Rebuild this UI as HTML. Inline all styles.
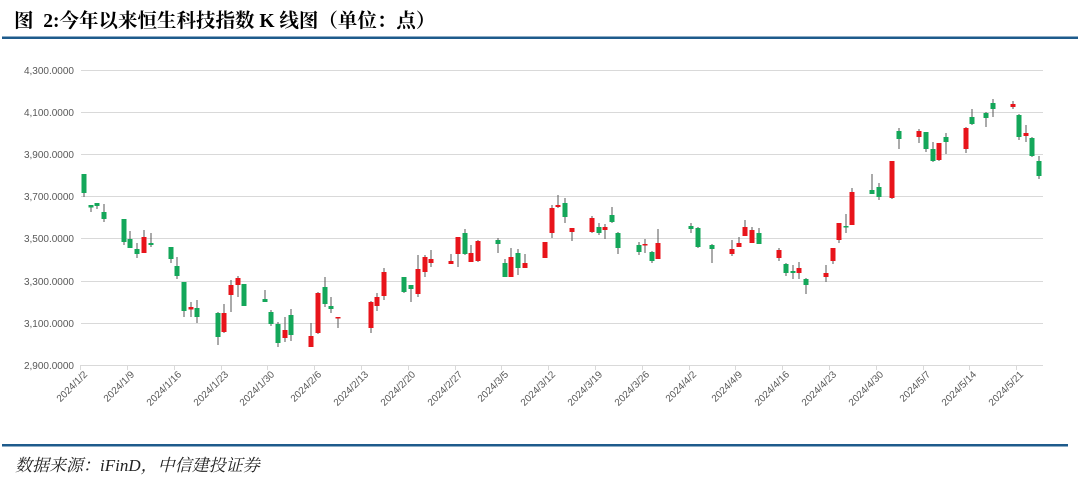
<!DOCTYPE html>
<html><head><meta charset="utf-8"><style>
html,body{margin:0;padding:0;background:#fff;width:1080px;height:483px;overflow:hidden}
.t{position:absolute;left:14px;top:5px;font:bold 19.5px "Liberation Serif","Noto Serif CJK SC","Noto Sans CJK SC",serif;color:#000;white-space:nowrap}
.s{position:absolute;left:15px;top:451px;font:italic 17px "Liberation Serif","Noto Serif CJK SC","Noto Sans CJK SC",serif;color:#222;white-space:nowrap}
</style></head><body>
<div class="t">图&nbsp; 2:今年以来恒生科技指数 K 线图（单位：点）</div>
<svg width="1080" height="483" style="position:absolute;left:0;top:0">
<rect x="2" y="36.5" width="1076" height="2.5" fill="#1e5b8c"/>
<rect x="2" y="444" width="1066" height="2.5" fill="#1e5b8c"/>
<g stroke="#d9d9d9" stroke-width="1">
<line x1="81" y1="70.5" x2="1043" y2="70.5"/><line x1="81" y1="112.5" x2="1043" y2="112.5"/>
<line x1="81" y1="154.5" x2="1043" y2="154.5"/><line x1="81" y1="196.5" x2="1043" y2="196.5"/>
<line x1="81" y1="238.5" x2="1043" y2="238.5"/><line x1="81" y1="281.5" x2="1043" y2="281.5"/>
<line x1="81" y1="323.5" x2="1043" y2="323.5"/><line x1="81" y1="365.5" x2="1043" y2="365.5"/>
</g>
<g font-family="Liberation Sans,sans-serif" font-size="10" fill="#595959" text-anchor="end">
<text x="74" y="74">4,300.0000</text><text x="74" y="116">4,100.0000</text>
<text x="74" y="158">3,900.0000</text><text x="74" y="200">3,700.0000</text>
<text x="74" y="242">3,500.0000</text><text x="74" y="285">3,300.0000</text>
<text x="74" y="327">3,100.0000</text><text x="74" y="369">2,900.0000</text>
</g>
<g stroke="#d9d9d9">
<line x1="80.5" y1="365" x2="80.5" y2="370"/><line x1="127.5" y1="365" x2="127.5" y2="370"/><line x1="174.5" y1="365" x2="174.5" y2="370"/><line x1="221.5" y1="365" x2="221.5" y2="370"/><line x1="267.5" y1="365" x2="267.5" y2="370"/><line x1="314.5" y1="365" x2="314.5" y2="370"/><line x1="361.5" y1="365" x2="361.5" y2="370"/><line x1="408.5" y1="365" x2="408.5" y2="370"/><line x1="455.5" y1="365" x2="455.5" y2="370"/><line x1="501.5" y1="365" x2="501.5" y2="370"/><line x1="548.5" y1="365" x2="548.5" y2="370"/><line x1="595.5" y1="365" x2="595.5" y2="370"/><line x1="642.5" y1="365" x2="642.5" y2="370"/><line x1="689.5" y1="365" x2="689.5" y2="370"/><line x1="735.5" y1="365" x2="735.5" y2="370"/><line x1="782.5" y1="365" x2="782.5" y2="370"/><line x1="829.5" y1="365" x2="829.5" y2="370"/><line x1="876.5" y1="365" x2="876.5" y2="370"/><line x1="923.5" y1="365" x2="923.5" y2="370"/><line x1="969.5" y1="365" x2="969.5" y2="370"/><line x1="1016.5" y1="365" x2="1016.5" y2="370"/>
</g>
<g font-family="Liberation Sans,sans-serif" font-size="10" fill="#595959" text-anchor="end">
<text transform="translate(88,375) rotate(-45)">2024/1/2</text>
<text transform="translate(135,375) rotate(-45)">2024/1/9</text>
<text transform="translate(182,375) rotate(-45)">2024/1/16</text>
<text transform="translate(229,375) rotate(-45)">2024/1/23</text>
<text transform="translate(275,375) rotate(-45)">2024/1/30</text>
<text transform="translate(322,375) rotate(-45)">2024/2/6</text>
<text transform="translate(369,375) rotate(-45)">2024/2/13</text>
<text transform="translate(416,375) rotate(-45)">2024/2/20</text>
<text transform="translate(463,375) rotate(-45)">2024/2/27</text>
<text transform="translate(509,375) rotate(-45)">2024/3/5</text>
<text transform="translate(556,375) rotate(-45)">2024/3/12</text>
<text transform="translate(603,375) rotate(-45)">2024/3/19</text>
<text transform="translate(650,375) rotate(-45)">2024/3/26</text>
<text transform="translate(697,375) rotate(-45)">2024/4/2</text>
<text transform="translate(743,375) rotate(-45)">2024/4/9</text>
<text transform="translate(790,375) rotate(-45)">2024/4/16</text>
<text transform="translate(837,375) rotate(-45)">2024/4/23</text>
<text transform="translate(884,375) rotate(-45)">2024/4/30</text>
<text transform="translate(931,375) rotate(-45)">2024/5/7</text>
<text transform="translate(977,375) rotate(-45)">2024/5/14</text>
<text transform="translate(1024,375) rotate(-45)">2024/5/21</text>
</g>
<g stroke="#555" stroke-width="1">
<line x1="84" y1="174" x2="84" y2="197"/><line x1="91" y1="205" x2="91" y2="212"/><line x1="97" y1="203" x2="97" y2="209"/><line x1="104" y1="204" x2="104" y2="222"/><line x1="124" y1="219" x2="124" y2="245"/><line x1="130" y1="231" x2="130" y2="248"/><line x1="137" y1="243" x2="137" y2="258"/><line x1="144" y1="230" x2="144" y2="253"/><line x1="151" y1="233" x2="151" y2="247"/><line x1="171" y1="247" x2="171" y2="263"/><line x1="177" y1="257" x2="177" y2="279"/><line x1="184" y1="282" x2="184" y2="317"/><line x1="191" y1="302" x2="191" y2="317"/><line x1="197" y1="300" x2="197" y2="323"/><line x1="218" y1="312" x2="218" y2="345"/><line x1="224" y1="304" x2="224" y2="333"/><line x1="231" y1="280" x2="231" y2="312"/><line x1="238" y1="276" x2="238" y2="297"/><line x1="244" y1="284" x2="244" y2="306"/><line x1="265" y1="290" x2="265" y2="302"/><line x1="271" y1="310" x2="271" y2="326"/><line x1="278" y1="322" x2="278" y2="347"/><line x1="285" y1="317" x2="285" y2="342"/><line x1="291" y1="309" x2="291" y2="341"/><line x1="311" y1="323" x2="311" y2="347"/><line x1="318" y1="292" x2="318" y2="334"/><line x1="325" y1="277" x2="325" y2="307"/><line x1="331" y1="297" x2="331" y2="313"/><line x1="338" y1="317" x2="338" y2="328"/><line x1="371" y1="301" x2="371" y2="333"/><line x1="377" y1="293" x2="377" y2="311"/><line x1="384" y1="268" x2="384" y2="300"/><line x1="404" y1="277" x2="404" y2="293"/><line x1="411" y1="285" x2="411" y2="302"/><line x1="418" y1="255" x2="418" y2="297"/><line x1="425" y1="255" x2="425" y2="277"/><line x1="431" y1="250" x2="431" y2="267"/><line x1="451" y1="254" x2="451" y2="264"/><line x1="458" y1="237" x2="458" y2="267"/><line x1="465" y1="229" x2="465" y2="255"/><line x1="471" y1="245" x2="471" y2="262"/><line x1="478" y1="240" x2="478" y2="262"/><line x1="498" y1="238" x2="498" y2="253"/><line x1="505" y1="259" x2="505" y2="277"/><line x1="511" y1="248" x2="511" y2="277"/><line x1="518" y1="249" x2="518" y2="275"/><line x1="525" y1="254" x2="525" y2="268"/><line x1="545" y1="242" x2="545" y2="258"/><line x1="552" y1="205" x2="552" y2="238"/><line x1="558" y1="195" x2="558" y2="208"/><line x1="565" y1="198" x2="565" y2="223"/><line x1="572" y1="228" x2="572" y2="241"/><line x1="592" y1="216" x2="592" y2="233"/><line x1="599" y1="223" x2="599" y2="235"/><line x1="605" y1="224" x2="605" y2="239"/><line x1="612" y1="207" x2="612" y2="223"/><line x1="618" y1="232" x2="618" y2="254"/><line x1="639" y1="242" x2="639" y2="255"/><line x1="645" y1="239" x2="645" y2="253"/><line x1="652" y1="251" x2="652" y2="263"/><line x1="658" y1="229" x2="658" y2="259"/><line x1="691" y1="223" x2="691" y2="233"/><line x1="698" y1="227" x2="698" y2="248"/><line x1="712" y1="244" x2="712" y2="263"/><line x1="732" y1="240" x2="732" y2="256"/><line x1="739" y1="237" x2="739" y2="247"/><line x1="745" y1="220" x2="745" y2="236"/><line x1="752" y1="227" x2="752" y2="243"/><line x1="759" y1="228" x2="759" y2="244"/><line x1="779" y1="248" x2="779" y2="261"/><line x1="786" y1="263" x2="786" y2="276"/><line x1="793" y1="265" x2="793" y2="279"/><line x1="799" y1="262" x2="799" y2="279"/><line x1="806" y1="278" x2="806" y2="294"/><line x1="826" y1="265" x2="826" y2="282"/><line x1="833" y1="248" x2="833" y2="264"/><line x1="839" y1="223" x2="839" y2="243"/><line x1="846" y1="214" x2="846" y2="233"/><line x1="852" y1="188" x2="852" y2="225"/><line x1="872" y1="174" x2="872" y2="194"/><line x1="879" y1="183" x2="879" y2="200"/><line x1="892" y1="161" x2="892" y2="199"/><line x1="899" y1="128" x2="899" y2="149"/><line x1="919" y1="129" x2="919" y2="143"/><line x1="926" y1="132" x2="926" y2="152"/><line x1="933" y1="142" x2="933" y2="162"/><line x1="939" y1="143" x2="939" y2="161"/><line x1="946" y1="133" x2="946" y2="154"/><line x1="966" y1="127" x2="966" y2="153"/><line x1="972" y1="109" x2="972" y2="125"/><line x1="986" y1="112" x2="986" y2="127"/><line x1="993" y1="99" x2="993" y2="117"/><line x1="1013" y1="101" x2="1013" y2="109"/><line x1="1019" y1="114" x2="1019" y2="140"/><line x1="1026" y1="125" x2="1026" y2="142"/><line x1="1032" y1="137" x2="1032" y2="157"/><line x1="1039" y1="156" x2="1039" y2="179"/>
</g>
<g fill="#14a75a">
<rect x="81.5" y="174" width="5" height="19"/><rect x="88.5" y="205" width="5" height="2.5"/><rect x="94.5" y="203" width="5" height="3"/><rect x="101.5" y="212" width="5" height="7"/><rect x="121.5" y="219" width="5" height="23"/><rect x="127.5" y="239" width="5" height="9"/><rect x="134.5" y="249" width="5" height="5"/><rect x="148.5" y="243" width="5" height="2"/><rect x="168.5" y="247" width="5" height="12"/><rect x="174.5" y="266" width="5" height="10"/><rect x="181.5" y="282" width="5" height="29"/><rect x="194.5" y="308" width="5" height="9"/><rect x="215.5" y="313" width="5" height="24"/><rect x="241.5" y="284" width="5" height="22"/><rect x="262.5" y="299" width="5" height="3"/><rect x="268.5" y="312" width="5" height="12"/><rect x="275.5" y="324" width="5" height="19"/><rect x="288.5" y="315" width="5" height="20"/><rect x="322.5" y="287" width="5" height="17"/><rect x="328.5" y="306" width="5" height="3"/><rect x="401.5" y="277" width="5" height="15"/><rect x="408.5" y="285" width="5" height="4"/><rect x="462.5" y="233" width="5" height="21"/><rect x="495.5" y="240" width="5" height="4"/><rect x="502.5" y="263" width="5" height="14"/><rect x="515.5" y="253" width="5" height="15"/><rect x="562.5" y="203" width="5" height="14"/><rect x="596.5" y="227" width="5" height="6"/><rect x="609.5" y="215" width="5" height="7"/><rect x="615.5" y="233" width="5" height="15"/><rect x="636.5" y="245" width="5" height="7"/><rect x="649.5" y="252" width="5" height="9"/><rect x="688.5" y="226" width="5" height="3"/><rect x="695.5" y="228" width="5" height="19"/><rect x="709.5" y="245" width="5" height="4"/><rect x="756.5" y="233" width="5" height="11"/><rect x="783.5" y="264" width="5" height="9"/><rect x="790.5" y="271" width="5" height="2"/><rect x="803.5" y="279" width="5" height="6"/><rect x="843.5" y="226" width="5" height="1.5"/><rect x="869.5" y="190" width="5" height="4"/><rect x="876.5" y="187" width="5" height="10"/><rect x="896.5" y="131" width="5" height="8"/><rect x="923.5" y="132" width="5" height="17"/><rect x="930.5" y="149" width="5" height="12"/><rect x="943.5" y="137" width="5" height="5"/><rect x="969.5" y="117" width="5" height="7"/><rect x="983.5" y="113" width="5" height="5"/><rect x="990.5" y="103" width="5" height="6"/><rect x="1016.5" y="115" width="5" height="22"/><rect x="1029.5" y="138" width="5" height="18"/><rect x="1036.5" y="161" width="5" height="15"/>
</g>
<g fill="#e8141b">
<rect x="141.5" y="237" width="5" height="16"/><rect x="188.5" y="307" width="5" height="2.5"/><rect x="221.5" y="313" width="5" height="19"/><rect x="228.5" y="285" width="5" height="10"/><rect x="235.5" y="278" width="5" height="7"/><rect x="282.5" y="330" width="5" height="8"/><rect x="308.5" y="336" width="5" height="11"/><rect x="315.5" y="293" width="5" height="40"/><rect x="335.5" y="317" width="5" height="1.5"/><rect x="368.5" y="302" width="5" height="26"/><rect x="374.5" y="297" width="5" height="9"/><rect x="381.5" y="272" width="5" height="24"/><rect x="415.5" y="269" width="5" height="25"/><rect x="422.5" y="257" width="5" height="15"/><rect x="428.5" y="259" width="5" height="4"/><rect x="448.5" y="261" width="5" height="3"/><rect x="455.5" y="237" width="5" height="17"/><rect x="468.5" y="253" width="5" height="9"/><rect x="475.5" y="241" width="5" height="20"/><rect x="508.5" y="257" width="5" height="20"/><rect x="522.5" y="263" width="5" height="5"/><rect x="542.5" y="242" width="5" height="16"/><rect x="549.5" y="208" width="5" height="25"/><rect x="555.5" y="205" width="5" height="2"/><rect x="569.5" y="228" width="5" height="4"/><rect x="589.5" y="218" width="5" height="14"/><rect x="602.5" y="227" width="5" height="3"/><rect x="642.5" y="244" width="5" height="1.5"/><rect x="655.5" y="243" width="5" height="16"/><rect x="729.5" y="249" width="5" height="5"/><rect x="736.5" y="243" width="5" height="4"/><rect x="742.5" y="227" width="5" height="9"/><rect x="749.5" y="230" width="5" height="13"/><rect x="776.5" y="250" width="5" height="8"/><rect x="796.5" y="268" width="5" height="5"/><rect x="823.5" y="273" width="5" height="4"/><rect x="830.5" y="248" width="5" height="13"/><rect x="836.5" y="223" width="5" height="17"/><rect x="849.5" y="192" width="5" height="33"/><rect x="889.5" y="161" width="5" height="37"/><rect x="916.5" y="131" width="5" height="6"/><rect x="936.5" y="143" width="5" height="17"/><rect x="963.5" y="128" width="5" height="21"/><rect x="1010.5" y="104" width="5" height="3"/><rect x="1023.5" y="133" width="5" height="3"/>
</g>
</svg>
<div class="s">数据来源：iFinD，中信建投证券</div>
</body></html>
